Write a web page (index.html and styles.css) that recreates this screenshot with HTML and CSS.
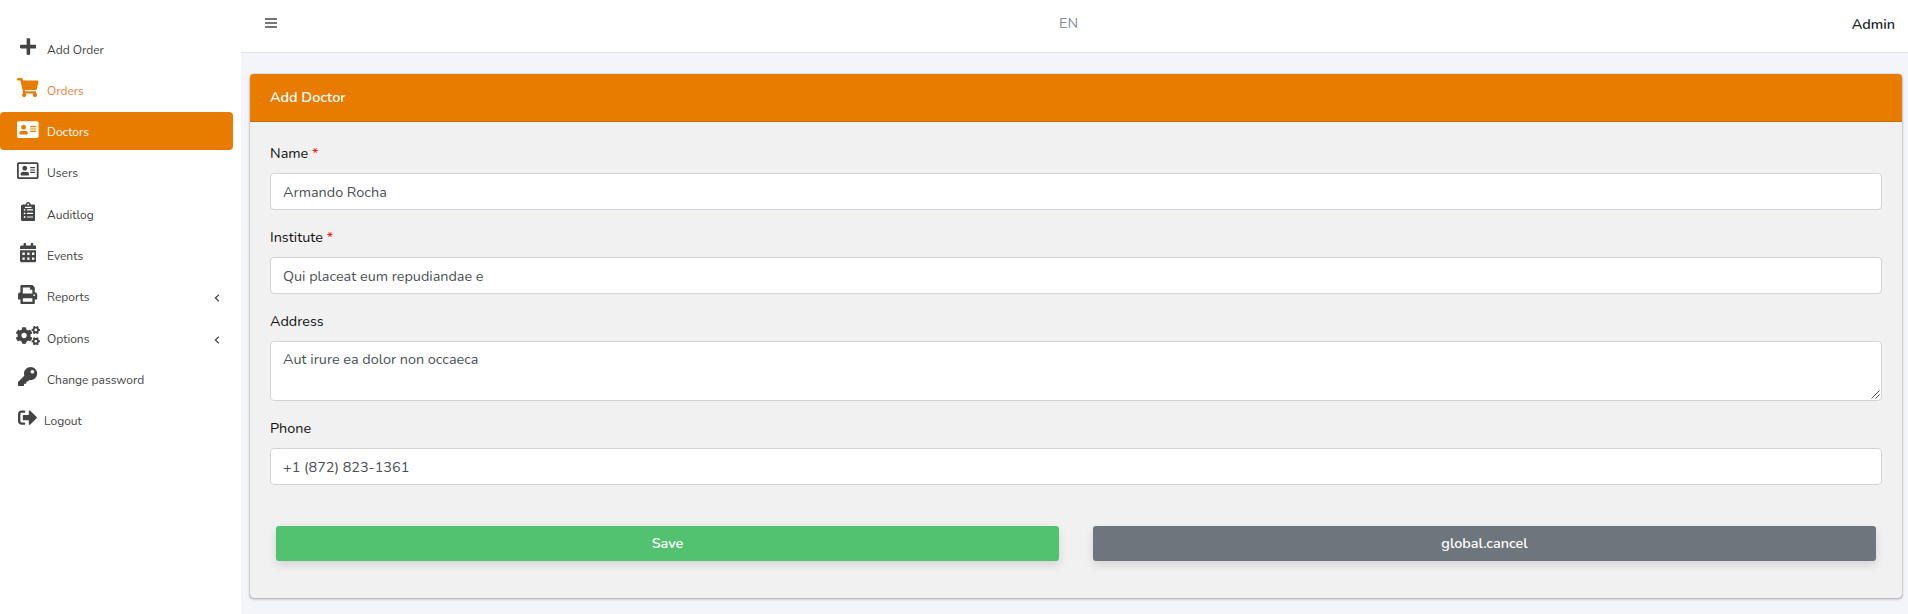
FILE: index.html
```html
<!DOCTYPE html>
<html lang="en">
<head>
<meta charset="utf-8">
<title>Add Doctor</title>
<link rel="stylesheet" href="styles.css">
</head>
<body>
<div class="app">
  <nav class="sidebar">
    <a class="item"><span class="icon"><svg viewBox="0 0 448 512"><path d="M416 208H272V64c0-17.67-14.33-32-32-32h-32c-17.67 0-32 14.33-32 32v144H32c-17.67 0-32 14.33-32 32v32c0 17.67 14.33 32 32 32h144v144c0 17.67 14.33 32 32 32h32c17.67 0 32-14.33 32-32V304h144c17.67 0 32-14.33 32-32v-32c0-17.67-14.33-32-32-32z"/></svg></span><span class="text">Add Order</span></a>
    <a class="item item-accent"><span class="icon"><svg viewBox="0 0 576 512"><path d="M528.12 301.319l47.273-208C578.806 78.301 567.391 64 551.99 64H159.208l-9.166-44.81C147.758 8.021 137.93 0 126.529 0H24C10.745 0 0 10.745 0 24v16c0 13.255 10.745 24 24 24h69.883l70.248 343.435C147.325 417.1 136 435.222 136 456c0 30.928 25.072 56 56 56s56-25.072 56-56c0-15.674-6.447-29.835-16.824-40h209.647C430.447 426.165 424 440.326 424 456c0 30.928 25.072 56 56 56s56-25.072 56-56c0-22.172-12.888-41.332-31.579-50.405l5.517-24.276c3.413-15.018-8.002-29.319-23.403-29.319H218.117l-6.545-32h293.145c11.206 0 20.92-7.754 23.403-18.681z"/></svg></span><span class="text">Orders</span></a>
    <a class="item item-active"><span class="icon"><svg viewBox="0 0 576 512"><path fill-rule="evenodd" d="M528 32H48C21.500 32 0 53.500 0 80v352c0 26.500 21.500 48 48 48h480c26.500 0 48-21.500 48-48V80c0-26.500-21.500-48-48-48zM176 128c35.300 0 64 28.700 64 64s-28.700 64-64 64-64-28.700-64-64 28.700-64 64-64zm112 236.800c0 10.600-10 19.200-22.400 19.200H86.400C74 384 64 375.400 64 364.800v-19.200c0-31.800 30.100-57.600 67.200-57.600h5c12.300 5.100 25.700 8 39.800 8s27.600-2.900 39.800-8h5c37.100 0 67.200 25.800 67.200 57.600zM352 288h160v32H352zM352 224h160v32H352zM352 160h160v32H352z"/></svg></span><span class="text">Doctors</span></a>
    <a class="item"><span class="icon"><svg viewBox="0 0 576 512"><path fill-rule="evenodd" d="M528 32H48C21.500 32 0 53.500 0 80v352c0 26.500 21.500 48 48 48h480c26.500 0 48-21.500 48-48V80c0-26.500-21.500-48-48-48zm0 400H48V80h480z"/><path d="M208 256c35.300 0 64-28.700 64-64s-28.700-64-64-64-64 28.700-64 64 28.700 64 64 64zm-89.600 128h179.200c12.400 0 22.400-8.600 22.400-19.200v-19.200c0-31.800-30.100-57.600-67.200-57.600-10.800 0-18.700 8-44.800 8-26.900 0-33.400-8-44.800-8-37.100 0-67.200 25.800-67.200 57.600v19.200c0 10.600 10 19.200 22.400 19.200zM352 288h128v32H352zM352 224h128v32H352zM352 160h128v32H352z"/></svg></span><span class="text">Users</span></a>
    <a class="item"><span class="icon"><svg viewBox="0 0 384 512"><path fill-rule="evenodd" d="M336 64h-80c0-35.300-28.700-64-64-64s-64 28.700-64 64H48C21.500 64 0 85.500 0 112v352c0 26.500 21.500 48 48 48h288c26.500 0 48-21.500 48-48V112c0-26.500-21.500-48-48-48zM192 40a24 24 0 1 1 0 48 24 24 0 0 1 0-48zM104 128h176v32H104zM96 184a24 24 0 1 1 0 48 24 24 0 0 1 0-48zM96 280a24 24 0 1 1 0 48 24 24 0 0 1 0-48zM96 376a24 24 0 1 1 0 48 24 24 0 0 1 0-48zM160 192h160v32H160zM160 288h160v32H160zM160 384h160v32H160z"/></svg></span><span class="text">Auditlog</span></a>
    <a class="item"><span class="icon"><svg viewBox="0 0 448 512"><path fill-rule="evenodd" d="M400 64h-48V16c0-8.800-7.200-16-16-16h-32c-8.800 0-16 7.200-16 16v48H160V16c0-8.800-7.200-16-16-16h-32c-8.800 0-16 7.200-16 16v48H48C21.500 64 0 85.500 0 112v48h448v-48c0-26.500-21.500-48-48-48zM0 192v272c0 26.500 21.500 48 48 48h352c26.500 0 48-21.500 48-48V192zM64 256h64v64H64zM192 256h64v64h-64zM320 256h64v64h-64zM64 384h64v64H64zM192 384h64v64h-64zM320 384h64v64h-64z"/></svg></span><span class="text">Events</span></a>
    <a class="item"><span class="icon"><svg viewBox="0 0 512 512"><path d="M448 192V77.250c0-8.490-3.370-16.620-9.370-22.630L393.370 9.370c-6-6-14.140-9.370-22.630-9.370H96C78.330 0 64 14.330 64 32v160c-35.350 0-64 28.650-64 64v112c0 8.840 7.160 16 16 16h48v96c0 17.670 14.330 32 32 32h320c17.670 0 32-14.330 32-32v-96h48c8.840 0 16-7.160 16-16V256c0-35.350-28.650-64-64-64zm-64 256H128v-96h256v96zm0-224H128V64h192v48c0 8.840 7.160 16 16 16h48v96zm48 72c-13.250 0-24-10.750-24-24 0-13.260 10.750-24 24-24s24 10.740 24 24c0 13.250-10.750 24-24 24z"/></svg></span><span class="text">Reports</span><svg class="chevron" viewBox="0 0 6 8"><path d="M4.800 .8 1.400 4l3.400 3.200"/></svg></a>
    <a class="item"><span class="icon"><svg viewBox="0 0 640 512"><defs><path id="small-cog" d="M512.1 191l-8.200 14.300c-3 5.300-9.400 7.500-15.100 5.400-11.800-4.400-22.600-10.700-32.100-18.600-4.600-3.800-5.800-10.500-2.800-15.700l8.200-14.300c-6.900-8-12.300-17.300-15.900-27.400h-16.500c-6 0-11.200-4.300-12.200-10.300-2-12-2.100-24.600 0-37.100 1-6 6.200-10.400 12.200-10.400h16.500c3.600-10.100 9-19.400 15.900-27.400l-8.200-14.300c-3-5.200-1.900-11.900 2.800-15.700 9.500-7.900 20.400-14.200 32.100-18.600 5.700-2.100 12.100.1 15.100 5.400l8.200 14.300c10.500-1.900 21.200-1.900 31.700 0L552 6.300c3-5.300 9.400-7.500 15.100-5.400 11.800 4.400 22.600 10.700 32.100 18.600 4.600 3.800 5.800 10.500 2.800 15.700l-8.200 14.300c6.900 8 12.300 17.300 15.900 27.400h16.500c6 0 11.200 4.300 12.200 10.300 2 12 2.100 24.600 0 37.100-1 6-6.200 10.400-12.200 10.400h-16.500c-3.600 10.100-9 19.400-15.900 27.400l8.200 14.300c3 5.200 1.900 11.900-2.800 15.700-9.500 7.900-20.400 14.200-32.100 18.600-5.700 2.100-12.100-.1-15.100-5.400l-8.200-14.300c-10.400 1.900-21.200 1.900-31.700 0zm-10.500-58.800c38.500 29.600 82.400-14.300 52.800-52.800-38.500-29.700-82.400 14.300-52.800 52.800z"/></defs><use href="#small-cog"/><use href="#small-cog" y="301"/><path d="M386.300 286.100l33.700 16.800c10.100 5.800 14.500 18.100 10.500 29.100-8.900 24.200-26.400 46.400-42.600 65.800-7.400 8.900-20.200 11.100-30.300 5.300l-29.100-16.800c-16 13.700-34.600 24.600-54.900 31.700v33.600c0 11.600-8.300 21.600-19.700 23.600-24.600 4.200-50.400 4.400-75.900 0-11.500-2-20-11.900-20-23.600V418c-20.300-7.200-38.900-18-54.900-31.700L74 403c-10 5.800-22.900 3.600-30.300-5.300-16.200-19.400-33.300-41.600-42.200-65.700-4-10.900.4-23.200 10.500-29.100l33.300-16.800c-3.900-20.900-3.900-42.400 0-63.400L12 205.800c-10.100-5.800-14.600-18.100-10.500-29 8.900-24.200 26-46.400 42.200-65.800 7.400-8.900 20.200-11.100 30.300-5.300l29.100 16.800c16-13.700 34.600-24.600 54.900-31.700V57.100c0-11.500 8.200-21.500 19.600-23.500 24.600-4.200 50.500-4.400 76-.1 11.500 2 20 11.900 20 23.600v33.600c20.300 7.200 38.900 18 54.900 31.700l29.100-16.800c10-5.800 22.900-3.600 30.300 5.300 16.200 19.400 33.200 41.600 42.100 65.800 4 10.900.1 23.200-10 29.100l-33.700 16.800c3.900 21 3.900 42.500 0 63.500zm-117.600 21.100c59.200-77-28.700-164.900-105.700-105.700-59.200 77 28.700 164.900 105.700 105.700z"/></svg></span><span class="text">Options</span><svg class="chevron" viewBox="0 0 6 8"><path d="M4.800 .8 1.400 4l3.400 3.200"/></svg></a>
    <a class="item item-low"><span class="icon"><svg viewBox="0 0 512 512"><path d="M512 176.001C512 273.203 433.202 352 336 352c-11.220 0-22.190-1.062-32.827-3.069l-24.012 27.014A23.999 23.999 0 0 1 261.223 384H224v40c0 13.255-10.745 24-24 24h-40v40c0 13.255-10.745 24-24 24H24c-13.255 0-24-10.745-24-24v-78.059c0-6.365 2.529-12.470 7.029-16.971l161.802-161.802C163.108 213.814 160 195.271 160 176 160 78.798 238.797.001 335.999 0 433.488-.001 512 78.511 512 176.001zM336 128c0 26.510 21.490 48 48 48s48-21.490 48-48-21.490-48-48-48-48 21.490-48 48z"/></svg></span><span class="text">Change password</span></a>
    <a class="item item-logout"><span class="icon"><svg viewBox="0 0 512 512"><path d="M497 273L329 441c-15 15-41 4.500-41-17v-96H152c-13.300 0-24-10.700-24-24v-96c0-13.300 10.700-24 24-24h136V88c0-21.400 25.900-32 41-17l168 168c9.300 9.400 9.300 24.600 0 34zM192 436v-40c0-6.600-5.400-12-12-12H96c-17.700 0-32-14.300-32-32V160c0-17.700 14.300-32 32-32h84c6.600 0 12-5.400 12-12V76c0-6.600-5.400-12-12-12H96c-53 0-96 43-96 96v192c0 53 43 96 96 96h84c6.600 0 12-5.400 12-12z"/></svg></span><span class="text">Logout</span></a>
  </nav>
  <div class="page">
    <header class="topbar">
      <svg class="burger" viewBox="0 0 12 10"><path d="M0 0h12v2H0zM0 4h12v2H0zM0 8h12v2H0z"/></svg>
      <span class="lang">EN</span>
      <span class="user">Admin</span>
    </header>
    <main class="content">
      <form class="card">
        <div class="card-header"><span>Add Doctor</span></div>
        <div class="card-body">
          <label class="label">Name <span class="required">*</span></label>
          <div class="control">Armando Rocha</div>
          <label class="label">Institute <span class="required">*</span></label>
          <div class="control">Qui placeat eum repudiandae e</div>
          <label class="label">Address</label>
          <div class="control control-area">Aut irure ea dolor non occaeca<svg class="grip" viewBox="0 0 9 9"><path d="M.5 8.500l8-8M4.500 8.500l4-4"/></svg></div>
          <label class="label">Phone</label>
          <div class="control">+1 (872) 823-1361</div>
          <div class="actions">
            <button type="button" class="btn btn-save">Save</button>
            <button type="button" class="btn btn-cancel">global.cancel</button>
          </div>
        </div>
      </form>
    </main>
  </div>
</div>
</body>
</html>
```
FILE: styles.css
```css
* { box-sizing: border-box; }
body {
  margin: 0;
  font-family: Nunito, Lato, "Open Sans", sans-serif;
  font-size: 14.4px;
  color: #212529;
  background: #f4f5fa;
}
.app { display: flex; height: 614px; overflow: hidden; }

.sidebar {
  width: 241px;
  flex: none;
  padding: 29.4px 8px 0 0;
  background: #fff;
}
.item {
  display: flex;
  align-items: center;
  height: 38px;
  margin-bottom: 3.28px;
  padding: 0 13px 0 16px;
  border-radius: 4px;
  color: #444;
  font-size: 12px;
}
.icon {
  display: flex;
  justify-content: center;
  width: 24px;
  margin: -3.6px 7px 0 0;
}
.icon svg { height: 19.2px; flex: none; fill: currentColor; }
.text { padding-top: 2.5px; line-height: 18px; white-space: nowrap; }
.item-accent { color: #e8833a; }
.item-accent .icon { color: #e77c00; }
.item-active { background: #e77c00; color: #fff; }
.item-logout .icon { margin-right: 4px; }
.chevron {
  width: 6px;
  height: 8px;
  margin: 5px 0 0 auto;
  fill: none;
  stroke: #444;
  stroke-width: 1.2;
}

.page { flex: 1; min-width: 0; }
.topbar {
  display: grid;
  grid-template-columns: 794px 1fr auto;
  align-items: center;
  height: 53px;
  padding: 0 13px 6px 24px;
  background: #fff;
  border-bottom: 1px solid #dee2e6;
}
.burger { width: 12px; height: 10px; fill: #77757a; }
.lang { color: #858a9c; }
.user { padding-top: 2px; font-weight: 600; }

.content { padding: 21px 6px 0 9px; }
.card {
  height: 524px;
  border-radius: 4px;
  background: #f1f1f1;
  box-shadow: 0 0 1px rgba(0, 0, 0, .5), 0 1px 3px rgba(0, 0, 0, .3);
}
.card-header {
  display: flex;
  align-items: center;
  height: 48px;
  padding: 0 20px 2px;
  border-radius: 4px 4px 0 0;
  border-bottom: 1px solid #cc6c00;
  background: #e77c00;
  color: #fff;
  font-weight: 600;
}
.card-body { padding: 20px 20px 0; }
.label {
  display: block;
  height: 31px;
  line-height: 23px;
  color: #111;
}
.required { color: #f00; }
.control {
  display: flex;
  align-items: center;
  height: 37px;
  margin-bottom: 16px;
  padding: 2px 12px 0;
  border: 1px solid #ced4da;
  border-radius: 4px;
  background: #fff;
  color: #495057;
  line-height: 23px;
}
.control-area { position: relative; align-items: flex-start; height: 60px; padding-top: 6px; }
.grip {
  position: absolute;
  right: 1px;
  bottom: 1px;
  width: 9px;
  height: 9px;
  fill: none;
  stroke: #555;
  stroke-width: 1;
}
.actions { display: flex; gap: 34px; padding: 25px 6px 0; }
.btn {
  flex: 1;
  height: 35px;
  padding: 0 0 2px;
  border: 0;
  border-radius: 3px;
  color: #fff;
  font: inherit;
  font-weight: 600;
  box-shadow: 0 4px 10px rgba(0, 0, 0, .12);
}
.btn-save { background: #53c270; }
.btn-cancel { background: #6e757c; }
```
